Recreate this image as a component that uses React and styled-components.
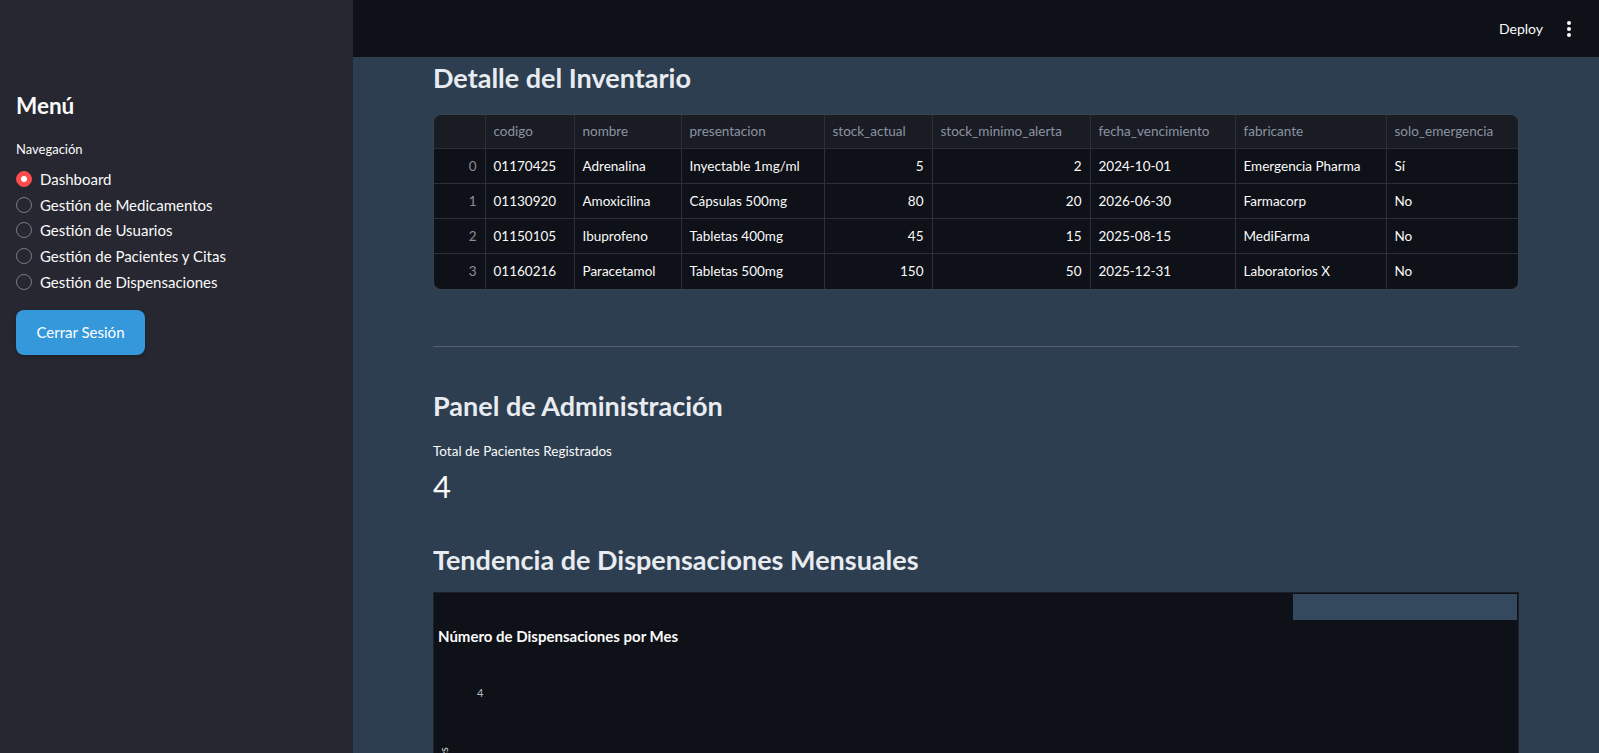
import styled, { createGlobalStyle } from "styled-components";

const SIDEBAR_BG = "#262730";
const MAIN_BG = "#2d3e50";
const DARK_BG = "#0e1117";
const TEXT = "#fafafa";
const FONT = `Lato, "Noto Sans", sans-serif`;

const GlobalStyle = createGlobalStyle`
  html, body {
    margin: 0;
    padding: 0;
    height: 100%;
    overflow: hidden;
    background: ${MAIN_BG};
    font-family: ${FONT};
    color: ${TEXT};
  }
  * { box-sizing: border-box; }
`;

const Page = styled.div`
  display: flex;
  height: 753px;
  overflow: hidden;
`;

const Sidebar = styled.aside`
  width: 353px;
  flex-shrink: 0;
  background: ${SIDEBAR_BG};
  padding: 92px 16px 0;
  display: flex;
  flex-direction: column;
`;

const SideTitle = styled.h2`
  margin: 0;
  font-size: 22.5px;
  font-weight: 700;
  line-height: 28px;
`;

const SmallLabel = styled.div`
  font-size: ${(p) => p.$size || 13.5}px;
  line-height: 20px;
  margin-top: ${(p) => p.$top || 0}px;
`;

const RadioList = styled.div`
  display: flex;
  flex-direction: column;
  margin-top: 7px;
`;

const RadioRow = styled.label`
  display: flex;
  align-items: center;
  gap: 8px;
  height: 25.75px;
  font-size: 15px;
`;

const RadioDot = styled.span`
  width: 16px;
  height: 16px;
  border-radius: 50%;
  flex-shrink: 0;
  border: 1px solid ${(p) => (p.$on ? "#ff4b4b" : "#7a7c85")};
  background: ${(p) => (p.$on ? "#ff4b4b" : "transparent")};
  display: flex;
  align-items: center;
  justify-content: center;
  &::after {
    content: "";
    width: 6px;
    height: 6px;
    border-radius: 50%;
    background: ${(p) => (p.$on ? "#fff" : "transparent")};
  }
`;

const LogoutButton = styled.button`
  align-self: flex-start;
  margin-top: 15px;
  width: 129px;
  height: 45px;
  border: none;
  border-radius: 8px;
  background: #3498db;
  color: #fff;
  font-family: ${FONT};
  font-size: 15px;
  box-shadow: 0 2px 4px rgba(0, 0, 0, 0.25);
`;

const Main = styled.main`
  flex: 1;
  display: flex;
  flex-direction: column;
  min-width: 0;
`;

const TopBar = styled.header`
  height: 57px;
  flex-shrink: 0;
  background: ${DARK_BG};
  display: flex;
  align-items: center;
  justify-content: flex-end;
  padding-right: 27px;
  gap: 23px;
`;

const DeployLink = styled.span`
  font-size: 14px;
`;

const Content = styled.div`
  padding: 0 80px;
  display: flex;
  flex-direction: column;
`;

const Heading = styled.h3`
  margin: ${(p) => p.$top}px 0 0;
  font-size: 27px;
  font-weight: 700;
  line-height: 33.6px;
  color: #e8ecf0;
`;

const TableWrap = styled.div`
  margin-top: 19px;
  border: 1px solid #3a404c;
  border-radius: 8px;
  overflow: hidden;
`;

const Table = styled.table`
  width: 100%;
  border-collapse: collapse;
  table-layout: fixed;
  font-size: 13.5px;
`;

const Th = styled.th`
  height: 34px;
  background: #1a1c24;
  color: #8a93a2;
  font-weight: 400;
  text-align: left;
  padding: 0 8px;
  border-left: 1px solid #2c2f38;
  border-bottom: 1px solid #2c2f38;
  white-space: nowrap;
  overflow: hidden;
  &:first-child { border-left: none; }
`;

const Td = styled.td`
  height: 35px;
  background: ${DARK_BG};
  color: ${(p) => (p.$index ? "#8b8f99" : TEXT)};
  text-align: ${(p) => (p.$right ? "right" : "left")};
  padding: 0 8px;
  border-left: 1px solid #2c2f38;
  border-top: 1px solid #2c2f38;
  white-space: nowrap;
  overflow: hidden;
  &:first-child { border-left: none; }
`;

const Divider = styled.hr`
  margin: 56px 0 0;
  border: none;
  border-top: 1px solid #56636f;
`;

const MetricValue = styled.div`
  margin-top: 9px;
  font-size: 31px;
  font-weight: 400;
  line-height: 33.6px;
`;

const ChartBox = styled.div`
  position: relative;
  margin-top: 16px;
  height: 300px;
  background: ${DARK_BG};
  border: 1px solid #1c2028;
`;

const ModeBar = styled.div`
  position: absolute;
  top: 1px;
  right: 1px;
  width: 224px;
  height: 26px;
  background: #34495e;
`;

const ChartTitle = styled.div`
  margin: 33px 0 0 4px;
  font-size: 15px;
  font-weight: 700;
  line-height: 20px;
`;

const columns = [
  { key: "", w: 51 },
  { key: "codigo", w: 89 },
  { key: "nombre", w: 107 },
  { key: "presentacion", w: 143 },
  { key: "stock_actual", w: 108, right: true },
  { key: "stock_minimo_alerta", w: 158, right: true },
  { key: "fecha_vencimiento", w: 145 },
  { key: "fabricante", w: 151 },
  { key: "solo_emergencia", w: 134 },
];

const rows = [
  ["0", "01170425", "Adrenalina", "Inyectable 1mg/ml", "5", "2", "2024-10-01", "Emergencia Pharma", "Sí"],
  ["1", "01130920", "Amoxicilina", "Cápsulas 500mg", "80", "20", "2026-06-30", "Farmacorp", "No"],
  ["2", "01150105", "Ibuprofeno", "Tabletas 400mg", "45", "15", "2025-08-15", "MediFarma", "No"],
  ["3", "01160216", "Paracetamol", "Tabletas 500mg", "150", "50", "2025-12-31", "Laboratorios X", "No"],
];

const menu = [
  "Dashboard",
  "Gestión de Medicamentos",
  "Gestión de Usuarios",
  "Gestión de Pacientes y Citas",
  "Gestión de Dispensaciones",
];

const Kebab = () => (
  <svg width="6" height="18" viewBox="0 0 6 18">
    <circle cx="3" cy="3" r="2" fill="#fafafa" />
    <circle cx="3" cy="9" r="2" fill="#fafafa" />
    <circle cx="3" cy="15" r="2" fill="#fafafa" />
  </svg>
);

const ChartAxis = () => (
  <svg width="100%" height="200" style={{ display: "block" }}>
    <text x="43" y="51" fontSize="11" fill="#b8bcc4" fontFamily="Lato, sans-serif">4</text>
    <text
      x="0"
      y="0"
      fontSize="11"
      fill="#d0d3d8"
      fontFamily="Lato, sans-serif"
      transform="translate(14 176) rotate(-90)"
    >
      Dispensaciones
    </text>
  </svg>
);

export default function App() {
  return (
    <>
      <GlobalStyle />
      <Page>
        <Sidebar>
          <SideTitle>Menú</SideTitle>
          <SmallLabel $top={19} $size={13}>Navegación</SmallLabel>
          <RadioList>
            {menu.map((m, i) => (
              <RadioRow key={m}>
                <RadioDot $on={i === 0} />
                {m}
              </RadioRow>
            ))}
          </RadioList>
          <LogoutButton>Cerrar Sesión</LogoutButton>
        </Sidebar>
        <Main>
          <TopBar>
            <DeployLink>Deploy</DeployLink>
            <Kebab />
          </TopBar>
          <Content>
            <Heading $top={4}>Detalle del Inventario</Heading>
            <TableWrap>
              <Table>
                <colgroup>
                  {columns.map((c, i) => (
                    <col key={i} style={{ width: c.w }} />
                  ))}
                </colgroup>
                <thead>
                  <tr>
                    {columns.map((c, i) => (
                      <Th key={i}>{c.key}</Th>
                    ))}
                  </tr>
                </thead>
                <tbody>
                  {rows.map((r) => (
                    <tr key={r[0]}>
                      {r.map((v, i) => (
                        <Td key={i} $index={i === 0} $right={i === 0 || columns[i].right}>
                          {v}
                        </Td>
                      ))}
                    </tr>
                  ))}
                </tbody>
              </Table>
            </TableWrap>
            <Divider />
            <Heading $top={42}>Panel de Administración</Heading>
            <SmallLabel $top={19}>Total de Pacientes Registrados</SmallLabel>
            <MetricValue>4</MetricValue>
            <Heading $top={39}>Tendencia de Dispensaciones Mensuales</Heading>
            <ChartBox>
              <ModeBar />
              <ChartTitle>Número de Dispensaciones por Mes</ChartTitle>
              <ChartAxis />
            </ChartBox>
          </Content>
        </Main>
      </Page>
    </>
  );
}
